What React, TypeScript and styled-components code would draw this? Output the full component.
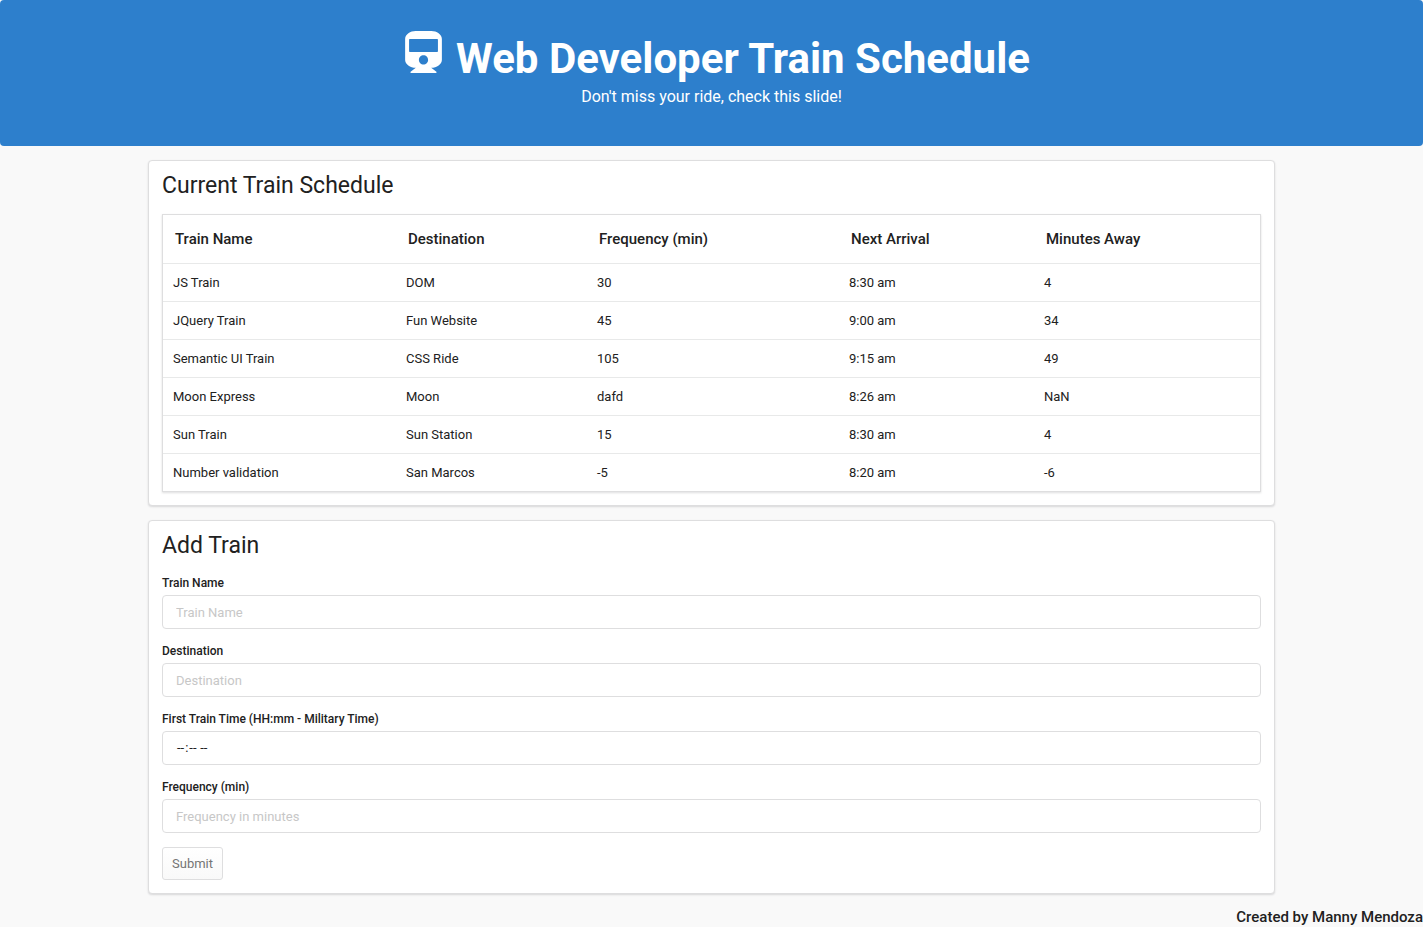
import React from "react";
import styled, { createGlobalStyle } from "styled-components";

const GlobalStyle = createGlobalStyle`
  *, *::before, *::after { box-sizing: border-box; }
  body {
    margin: 0;
    background: #f9f9f9;
    color: #212121;
    font-family: Roboto, Arial, sans-serif;
    font-size: 13px;
    line-height: 18px;
  }
`;

const Banner = styled.header`
  padding: 31px 0 39px;
  border-radius: 4px;
  background: #2d7fcc;
  color: #ffffff;
  text-align: center;
`;

const BannerTitle = styled.h1`
  display: flex;
  justify-content: center;
  margin: 0;
  padding-left: 12px;
  font-size: 42px;
  line-height: 56px;
  font-weight: 700;
`;

const TrainIcon = styled.svg`
  width: 37px;
  height: 42px;
  margin-right: 14px;
  fill: currentColor;
`;

const Tagline = styled.p`
  margin: 0;
  font-size: 16px;
  line-height: 20px;
`;

const Content = styled.main`
  display: flex;
  flex-direction: column;
  gap: 14px;
  max-width: 1127px;
  margin: 14px auto 0;
`;

const Panel = styled.section`
  padding: 12px 13px 13px;
  border: 1px solid #dededf;
  border-radius: 4px;
  background: #ffffff;
  box-shadow: 0 1px 2px rgba(34, 36, 38, 0.15);
`;

const PanelTitle = styled.h2`
  margin: 0;
  font-size: 23px;
  line-height: 26px;
  font-weight: 400;
`;

const ScheduleTable = styled.table`
  width: 100%;
  margin-top: 15px;
  table-layout: fixed;
  border: 1px solid #dededf;
  border-spacing: 0;
  box-shadow: 0 1px 2px rgba(34, 36, 38, 0.15);
`;

const HeadCell = styled.th<{ $width: string }>`
  width: ${(p) => p.$width};
  height: 48px;
  padding: 0 12px;
  font-size: 15px;
  font-weight: 500;
  text-align: left;
`;

const Cell = styled.td`
  height: 38px;
  padding: 0 10px;
  border-top: 1px solid #e8e9e9;
`;

const Fields = styled.div`
  display: flex;
  flex-direction: column;
  gap: 14px;
  margin: 16px 0 14px;
`;

const Field = styled.div`
  display: flex;
  flex-direction: column;
  gap: 4px;
`;

const Label = styled.label`
  font-size: 12px;
  line-height: 16px;
  font-weight: 500;
`;

const Input = styled.input`
  display: block;
  width: 100%;
  height: 34px;
  padding: 0 13px;
  border: 1px solid #dededf;
  border-radius: 4px;
  background: #ffffff;
  color: #212121;
  font: 400 13px/18px Roboto, Arial, sans-serif;

  &::placeholder { color: #c7c7c7; }
  &::-webkit-calendar-picker-indicator { display: none; }
`;

const SubmitButton = styled.button`
  display: block;
  height: 33px;
  padding: 0 9px;
  border: 1px solid #dededf;
  border-radius: 3px;
  background: linear-gradient(#ffffff, #f9f9f9);
  color: #757575;
  font: 400 13px/18px Roboto, Arial, sans-serif;
`;

const Credit = styled.footer`
  padding-top: 13px;
  font-size: 15px;
  line-height: 20px;
  font-weight: 500;
  text-align: right;
`;

const columns = [
  { label: "Train Name", width: "233px" },
  { label: "Destination", width: "191px" },
  { label: "Frequency (min)", width: "252px" },
  { label: "Next Arrival", width: "195px" },
  { label: "Minutes Away", width: "auto" },
];

const trains = [
  ["JS Train", "DOM", "30", "8:30 am", "4"],
  ["JQuery Train", "Fun Website", "45", "9:00 am", "34"],
  ["Semantic UI Train", "CSS Ride", "105", "9:15 am", "49"],
  ["Moon Express", "Moon", "dafd", "8:26 am", "NaN"],
  ["Sun Train", "Sun Station", "15", "8:30 am", "4"],
  ["Number validation", "San Marcos", "-5", "8:20 am", "-6"],
];

const fields = [
  { id: "train-name", label: "Train Name", type: "text", placeholder: "Train Name" },
  { id: "destination", label: "Destination", type: "text", placeholder: "Destination" },
  { id: "first-time", label: "First Train Time (HH:mm - Military Time)", type: "time" },
  { id: "frequency", label: "Frequency (min)", type: "text", placeholder: "Frequency in minutes" },
];

export default function App() {
  return (
    <>
      <GlobalStyle />
      <Banner>
        <BannerTitle>
          <TrainIcon viewBox="0 0 448 512" aria-hidden="true">
            <path d="M448 96v256c0 51.815-61.624 96-130.022 96l62.98 49.721C386.905 502.417 383.45 512 376 512H72c-7.578 0-10.892-9.594-4.957-14.279L130.022 448C61.82 448 0 403.954 0 352V96C0 42.981 64 0 128 0h192c65 0 128 42.981 128 96zm-48 148V108c0-6.627-5.373-12-12-12H60c-6.627 0-12 5.373-12 12v136c0 6.627 5.373 12 12 12h328c6.627 0 12-5.373 12-12zm-176 52c-30.928 0-56 25.072-56 56s25.072 56 56 56 56-25.072 56-56-25.072-56-56-56z" />
          </TrainIcon>
          Web Developer Train Schedule
        </BannerTitle>
        <Tagline>Don't miss your ride, check this slide!</Tagline>
      </Banner>
      <Content>
        <Panel>
          <PanelTitle>Current Train Schedule</PanelTitle>
          <ScheduleTable>
            <thead>
              <tr>
                {columns.map((c) => (
                  <HeadCell key={c.label} $width={c.width} scope="col">{c.label}</HeadCell>
                ))}
              </tr>
            </thead>
            <tbody>
              {trains.map((train) => (
                <tr key={train[0]}>
                  {train.map((value, i) => (
                    <Cell key={columns[i].label}>{value}</Cell>
                  ))}
                </tr>
              ))}
            </tbody>
          </ScheduleTable>
        </Panel>
        <Panel as="form">
          <PanelTitle>Add Train</PanelTitle>
          <Fields>
            {fields.map((f) => (
              <Field key={f.id}>
                <Label htmlFor={f.id}>{f.label}</Label>
                <Input id={f.id} type={f.type} placeholder={f.placeholder} />
              </Field>
            ))}
          </Fields>
          <SubmitButton type="button">Submit</SubmitButton>
        </Panel>
      </Content>
      <Credit>Created by Manny Mendoza</Credit>
    </>
  );
}
